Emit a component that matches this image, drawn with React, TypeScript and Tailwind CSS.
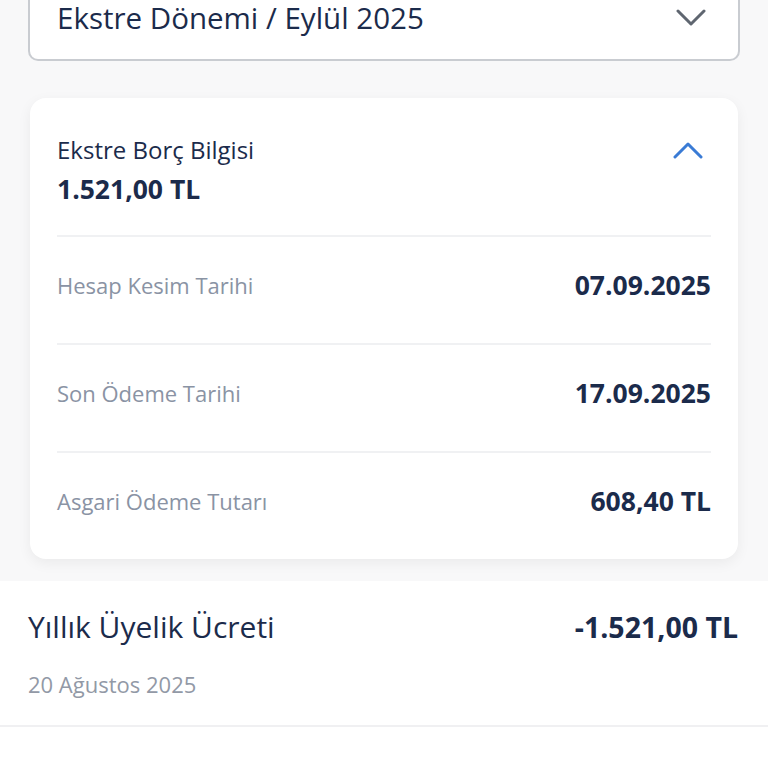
type Row = { label: string; value: string }

const rows: Row[] = [
  { label: 'Hesap Kesim Tarihi', value: '07.09.2025' },
  { label: 'Son Ödeme Tarihi', value: '17.09.2025' },
  { label: 'Asgari Ödeme Tutarı', value: '608,40 TL' },
]

function Chevron({ up, className }: { up?: boolean; className?: string }) {
  return (
    <svg width="30" height="18" viewBox="0 0 30 18" fill="none" className={className}>
      <path
        d={up ? 'M2 16 L15 3 L28 16' : 'M2 2 L15 15 L28 2'}
        stroke="currentColor"
        strokeWidth="3"
        strokeLinecap="round"
        strokeLinejoin="round"
      />
    </svg>
  )
}

export default function App() {
  return (
    <div
      className="h-[768px] w-[768px] overflow-hidden bg-white text-[#1b2b4b]"
      style={{ fontFamily: '"Open Sans", "Noto Sans", sans-serif' }}
    >
      {/* gri alan: dönem seçici + borç kartı */}
      <div className="bg-[#f8f8f9] px-7 pb-[22px]">
        {/* seçicinin üst kısmı ekranın dışında kalıyor */}
        <div className="flex h-[61px] items-center rounded-b-[10px] border-2 border-t-0 border-[#c9ccd1] bg-white pb-[24px] pl-[27px] pr-[32px]">
          <span className="flex-1 text-[29.5px] leading-[30px] text-[#1b2b4b]">Ekstre Dönemi / Eylül 2025</span>
          <Chevron className="text-[#5f6670]" />
        </div>

        <div className="mx-[2px] mt-[37px] rounded-[16px] bg-white px-[27px] shadow-[0_4px_14px_rgba(0,0,0,0.06)]">
          <div className="flex items-start justify-between pb-[31px] pt-[37px]">
            <div>
              <div className="text-[24px] font-medium leading-[30px]">Ekstre Borç Bilgisi</div>
              <div className="mt-[9px] text-[26.5px] font-bold leading-[30px]">1.521,00 TL</div>
            </div>
            <Chevron up className="mr-[8px] mt-[6px] text-[#3a7bd5]" />
          </div>
          {rows.map((r) => (
            <div
              key={r.label}
              className="flex h-[108px] items-center justify-between border-t-2 border-[#f0f1f3] pb-[10px]"
            >
              <span className="text-[22px] leading-none text-[#8a93a4]">{r.label}</span>
              <span className="text-[26.5px] font-bold leading-none">{r.value}</span>
            </div>
          ))}
        </div>
      </div>

      {/* hareket satırı */}
      <div className="border-b-2 border-[#f0f0f2] pb-[30px] pl-7 pr-[30px] pt-[26px]">
        <div className="flex items-center justify-between">
          <span className="text-[30px] font-medium leading-[40px]">Yıllık Üyelik Ücreti</span>
          <span className="text-[28.5px] font-bold leading-[40px]">-1.521,00 TL</span>
        </div>
        <div className="mt-[26px] text-[22px] leading-none text-[#9299a6]">20 Ağustos 2025</div>
      </div>
    </div>
  )
}
